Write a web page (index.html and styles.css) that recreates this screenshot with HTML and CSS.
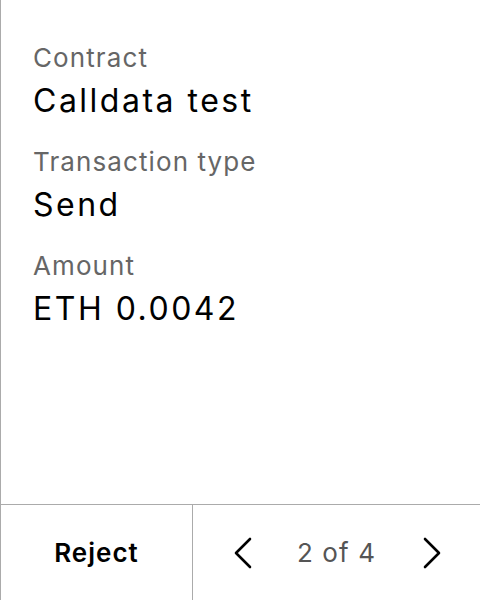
FILE: index.html
```html
<!DOCTYPE html>
<html>
<head>
<meta charset="utf-8">
<link rel="stylesheet" href="styles.css">
</head>
<body>
<div class="screen">
  <main class="details">
    <div class="field">
      <div class="label">Contract</div>
      <div class="value">Calldata test</div>
    </div>
    <div class="field">
      <div class="label">Transaction type</div>
      <div class="value">Send</div>
    </div>
    <div class="field">
      <div class="label">Amount</div>
      <div class="value">ETH 0.0042</div>
    </div>
  </main>
  <footer class="footer">
    <button class="reject">Reject</button>
    <div class="pager">
      <svg class="chev" width="18" height="32" viewBox="0 0 18 32"><path d="M16 2 L2 16 L16 30" fill="none" stroke="#000" stroke-width="2.6" stroke-linecap="round" stroke-linejoin="round"/></svg>
      <span class="count">2 of 4</span>
      <svg class="chev" width="18" height="32" viewBox="0 0 18 32"><path d="M2 2 L16 16 L2 30" fill="none" stroke="#000" stroke-width="2.6" stroke-linecap="round" stroke-linejoin="round"/></svg>
    </div>
  </footer>
</div>
</body>
</html>
```
FILE: styles.css
```css
html, body {
  margin: 0;
  padding: 0;
  background: #fff;
}
.screen {
  width: 480px;
  height: 600px;
  box-sizing: border-box;
  border-left: 1px solid #ababab;
  display: flex;
  flex-direction: column;
  font-family: Inter, "Noto Sans", sans-serif;
}
.details {
  flex: 1;
  padding: 38px 0 0 32px;
  display: flex;
  flex-direction: column;
  gap: 19px;
}
.field {
  display: flex;
  flex-direction: column;
}
.label {
  font-size: 26px;
  line-height: 40px;
  letter-spacing: 1.1px;
  color: #666;
}
.value {
  font-size: 32px;
  line-height: 45px;
  letter-spacing: 2.5px;
  color: #000;
}
.footer {
  height: 96px;
  box-sizing: border-box;
  border-top: 1px solid #ababab;
  display: flex;
}
.reject {
  width: 192px;
  border: none;
  border-right: 1px solid #ababab;
  background: #fff;
  font-family: inherit;
  font-size: 26px;
  font-weight: 600;
  letter-spacing: 1px;
  color: #000;
  padding: 0;
}
.pager {
  flex: 1;
  display: flex;
  align-items: center;
  padding-left: 41px;
  gap: 45px;
}
.count {
  font-size: 26px;
  letter-spacing: 1.1px;
  color: #555;
}
.count + .chev {
  margin-left: 2px;
}
.chev {
  display: block;
}
```
